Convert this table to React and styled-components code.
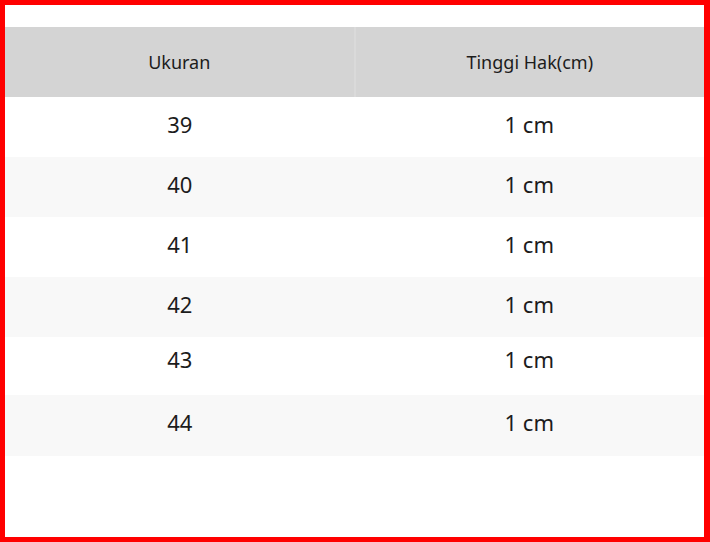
import React from 'react';
import styled, { createGlobalStyle } from 'styled-components';

const rows = [
  { size: '39', heel: '1 cm', h: 60, lift: 3 },
  { size: '40', heel: '1 cm', h: 60, lift: 3 },
  { size: '41', heel: '1 cm', h: 60, lift: 3 },
  { size: '42', heel: '1 cm', h: 60, lift: 3 },
  { size: '43', heel: '1 cm', h: 58, lift: 7 },
  { size: '44', heel: '1 cm', h: 61, lift: 4 },
];

function App() {
  return (
    <>
      <GlobalStyle />
      <Frame>
        <SizeTable>
          <thead>
            <tr>
              <HeadCell>Ukuran</HeadCell>
              <HeadCell>Tinggi Hak(cm)</HeadCell>
            </tr>
          </thead>
          <tbody>
            {rows.map((r, i) => (
              <Row key={r.size} $alt={i % 2 === 1} $h={r.h}>
                <Cell $lift={r.lift}>{r.size}</Cell>
                <Cell $lift={r.lift}>{r.heel}</Cell>
              </Row>
            ))}
          </tbody>
        </SizeTable>
      </Frame>
    </>
  );
}

export default App;

const GlobalStyle = createGlobalStyle`
  html, body {
    margin: 0;
    padding: 0;
    background: #fff;
  }
  body {
    font-family: "Noto Sans", "Open Sans", sans-serif;
  }
`;

const Frame = styled.div`
  width: 710px;
  height: 542px;
  box-sizing: border-box;
  border: 5px solid #ff0000;
  border-right-width: 6px;
  padding-top: 22px;
  background: #fff;
`;

const SizeTable = styled.table`
  width: 100%;
  border-collapse: collapse;
  table-layout: fixed;
  color: #1c1c1c;
`;

const HeadCell = styled.th`
  height: 70px;
  padding: 0;
  background: #d4d4d4;
  font-size: 18px;
  font-weight: 400;
  text-align: center;
  vertical-align: middle;
  & + & {
    border-left: 2px solid #dadada;
  }
`;

const Row = styled.tr`
  height: ${(p) => p.$h}px;
  background: ${(p) => (p.$alt ? '#f8f8f8' : '#fff')};
`;

const Cell = styled.td`
  padding: 0 0 ${(p) => p.$lift * 2}px;
  font-size: 22px;
  text-align: center;
  vertical-align: middle;
`;
